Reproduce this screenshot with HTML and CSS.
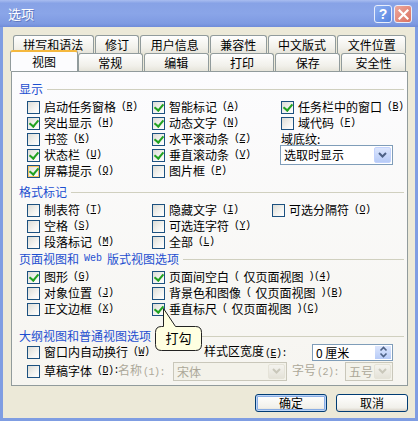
FILE: index.html
```html
<!DOCTYPE html>
<html lang="zh-CN">
<head>
    <meta charset="UTF-8">
    <title>选项</title>
    <link rel="stylesheet" href="styles.css">
</head>
<body>
    <div class="window">
        <!-- 标题栏 -->
        <div class="titlebar">
            <span class="title">选项</span>
            <div class="caption-btns">
                <span class="cap-btn help">?</span>
                <span class="cap-btn close">
                    <svg width="11" height="11" viewBox="0 0 11 11"><path d="M1.5 1.5 L9.5 9.5 M9.5 1.5 L1.5 9.5" stroke="#fff" stroke-width="2.2" stroke-linecap="square"/></svg>
                </span>
            </div>
        </div>

        <div class="client">
            <!-- 选项卡 -->
            <div class="tab-row back">
                <div class="tab">拼写和语法</div>
                <div class="tab">修订</div>
                <div class="tab">用户信息</div>
                <div class="tab">兼容性</div>
                <div class="tab">中文版式</div>
                <div class="tab">文件位置</div>
            </div>
            <div class="tab-row front">
                <div class="tab active">视图</div>
                <div class="tab">常规</div>
                <div class="tab">编辑</div>
                <div class="tab">打印</div>
                <div class="tab">保存</div>
                <div class="tab">安全性</div>
            </div>

            <div class="panel">
                <!-- 显示 -->
                <div class="group">
                    <div class="group-title">显示</div>
                    <div class="grid grid-show">
                        <label class="check"><span class="cb"></span>启动任务窗格<span class="key">(<u>R</u>)</span></label>
                        <label class="check"><span class="cb on"></span>智能标记<span class="key">(<u>A</u>)</span></label>
                        <label class="check"><span class="cb on"></span>任务栏中的窗口<span class="key">(<u>B</u>)</span></label>
                        <label class="check"><span class="cb on"></span>突出显示<span class="key">(<u>H</u>)</span></label>
                        <label class="check"><span class="cb on"></span>动态文字<span class="key">(<u>N</u>)</span></label>
                        <label class="check"><span class="cb"></span>域代码<span class="key">(<u>F</u>)</span></label>
                        <label class="check"><span class="cb"></span>书签<span class="key">(<u>K</u>)</span></label>
                        <label class="check"><span class="cb on"></span>水平滚动条<span class="key">(<u>Z</u>)</span></label>
                        <span class="field-label">域底纹<u>:</u></span>
                        <label class="check"><span class="cb on"></span>状态栏<span class="key">(<u>U</u>)</span></label>
                        <label class="check"><span class="cb on"></span>垂直滚动条<span class="key">(<u>V</u>)</span></label>
                        <div class="combo shade">
                            <span class="val">选取时显示</span>
                            <span class="drop"><svg width="9" height="6" viewBox="0 0 9 6"><path d="M1 1 L4.5 4.5 L8 1" fill="none" stroke="#4d6185" stroke-width="2"/></svg></span>
                        </div>
                        <label class="check"><span class="cb on hot"></span>屏幕提示<span class="key">(<u>Q</u>)</span></label>
                        <label class="check"><span class="cb"></span>图片框<span class="key">(<u>P</u>)</span></label>
                        <span></span>
                    </div>
                </div>

                <!-- 格式标记 -->
                <div class="group group-marks">
                    <div class="group-title">格式标记</div>
                    <div class="grid grid-marks">
                        <label class="check"><span class="cb"></span>制表符<span class="key">(<u>T</u>)</span></label>
                        <label class="check"><span class="cb"></span>隐藏文字<span class="key">(<u>I</u>)</span></label>
                        <label class="check"><span class="cb"></span>可选分隔符<span class="key">(<u>O</u>)</span></label>
                        <label class="check"><span class="cb"></span>空格<span class="key">(<u>S</u>)</span></label>
                        <label class="check"><span class="cb"></span>可选连字符<span class="key">(<u>Y</u>)</span></label>
                        <span></span>
                        <label class="check"><span class="cb"></span>段落标记<span class="key">(<u>M</u>)</span></label>
                        <label class="check"><span class="cb"></span>全部<span class="key">(<u>L</u>)</span></label>
                        <span></span>
                    </div>
                </div>

                <!-- 页面视图 -->
                <div class="group group-page">
                    <div class="group-title">页面视图和<span class="latin">Web</span>版式视图选项</div>
                    <div class="grid grid-page">
                        <label class="check"><span class="cb on"></span>图形<span class="key">(<u>G</u>)</span></label>
                        <label class="check"><span class="cb on"></span>页面间空白<span class="key">(</span>仅页面视图<span class="key">)(<u>4</u>)</span></label>
                        <label class="check"><span class="cb"></span>对象位置<span class="key">(<u>J</u>)</span></label>
                        <label class="check"><span class="cb"></span>背景色和图像<span class="key">(</span>仅页面视图<span class="key">)(<u>B</u>)</span></label>
                        <label class="check"><span class="cb"></span>正文边框<span class="key">(<u>X</u>)</span></label>
                        <label class="check"><span class="cb on"></span>垂直标尺<span class="key">(</span>仅页面视图<span class="key">)(<u>C</u>)</span></label>
                    </div>
                </div>

                <!-- 大纲视图 -->
                <div class="group group-outline">
                    <div class="group-title">大纲视图和普通视图选项</div>
                    <div class="outline-row">
                        <label class="check wrap-check"><span class="cb"></span>窗口内自动换行<span class="key">(<u>W</u>)</span></label>
                        <span class="style-label">样式区宽度<span class="key">(<u>E</u>):</span></span>
                        <div class="spin">
                            <span class="val">0 厘米</span>
                            <span class="spin-btn">
                                <svg width="9" height="12" viewBox="0 0 9 12"><path d="M1.5 4.5 L4.5 1.5 L7.5 4.5 M1.5 7.5 L4.5 10.5 L7.5 7.5" fill="none" stroke="#4d6185" stroke-width="1.6"/></svg>
                            </span>
                        </div>
                    </div>
                    <div class="outline-row row-font">
                        <label class="check draft-check"><span class="cb"></span>草稿字体<span class="key">(<u>D</u>):</span></label>
                        <span class="dim name-label">名称<span class="key">(1):</span></span>
                        <div class="combo dis font-name">
                            <span class="val">宋体</span>
                            <span class="drop"><svg width="9" height="6" viewBox="0 0 9 6"><path d="M1 1 L4.5 4.5 L8 1" fill="none" stroke="#c9c7ba" stroke-width="2"/></svg></span>
                        </div>
                        <span class="dim size-label">字号<span class="key">(2):</span></span>
                        <div class="combo dis font-size">
                            <span class="val">五号</span>
                            <span class="drop"><svg width="9" height="6" viewBox="0 0 9 6"><path d="M1 1 L4.5 4.5 L8 1" fill="none" stroke="#c9c7ba" stroke-width="2"/></svg></span>
                        </div>
                    </div>
                </div>
            </div>

            <!-- 按钮 -->
            <div class="actions">
                <button class="btn default">确定</button>
                <button class="btn">取消</button>
            </div>
        </div>

        <!-- 提示气泡 -->
        <div class="callout">
            <svg width="50" height="50" viewBox="0 0 50 50"><path d="M9.5 5.5 L21.5 23.5 H41.5 Q47.5 23.5 47.5 29.5 V41.5 Q47.5 47.5 41.5 47.5 H7.5 Q1.5 47.5 1.5 41.5 V29.5 Q1.5 23.5 7.5 23.5 H9.5 Z" fill="#ffffe1" stroke="#222" stroke-width="1"/></svg>
            <span class="callout-text">打勾</span>
        </div>
    </div>
</body>
</html>
```

FILE: styles.css
```css
* {
    box-sizing: border-box;
}

body {
    margin: 0;
    padding: 0;
    background: #ece9d8;
    color: #000;
    font-family: "Noto Sans CJK SC", "Liberation Sans", sans-serif;
    font-size: 12px;
    line-height: 16px;
}

.window {
    position: relative;
    width: 418px;
    height: 421px;
    background: #ece9d8;
    border: 3px solid #7f9de2;
    border-top: 0;
    display: flex;
    flex-direction: column;
}

/* 标题栏 */
.titlebar {
    height: 27px;
    margin: 0 -3px;
    padding: 0 6px 0 8px;
    display: flex;
    align-items: center;
    justify-content: space-between;
    background: linear-gradient(to bottom, #a9bdf0 0%, #87a2e6 12%, #8aa5e8 50%, #7e9ae2 88%, #6f8bd8 100%);
}

.title {
    color: #fff;
    font-size: 13px;
    text-shadow: 1px 1px 0 #6078c0;
}

.caption-btns {
    display: flex;
    gap: 2px;
    padding-top: 1px;
}

.cap-btn {
    width: 18px;
    height: 18px;
    border: 1px solid #e8eefc;
    border-radius: 3px;
    display: flex;
    align-items: center;
    justify-content: center;
    color: #fff;
    font-family: "Liberation Sans", sans-serif;
    font-weight: bold;
    font-size: 14px;
}

.help {
    background: linear-gradient(135deg, #8fb0f2, #5684e0);
}

.close {
    background: linear-gradient(135deg, #eea99e, #d9705f);
}

/* 客户区 */
.client {
    flex: 1;
    padding: 8px 7px 0 8px;
    display: flex;
    flex-direction: column;
}

.tab-row {
    display: flex;
    height: 18px;
    margin: 0 1px 0 2px;
}

.tab {
    text-align: center;
    line-height: 17px;
    border: 1px solid #919b9c;
    border-bottom: 0;
    border-radius: 3px 3px 0 0;
    background: linear-gradient(to bottom, #fefefe, #f1f0ea 70%, #e6e4da);
    white-space: nowrap;
}

.back .tab {
    flex: 1 1 auto;
    margin-right: 1px;
}

.front .tab {
    flex: 1 1 0;
    margin-right: 1px;
}

.front .tab.active {
    position: relative;
    z-index: 2;
    height: 21px;
    margin: -3px 0 0 -3px;
    flex-grow: 1.05;
    line-height: 19px;
    background: #fcfcfe;
    border-top: 2px solid #f5b83e;
}

/* 面板 */
.panel {
    height: 315px;
    border: 1px solid #919b9c;
    background: linear-gradient(to bottom, #fcfcfe, #f6f5f0);
    padding: 10px 0 0 7px;
}

.group-title {
    display: flex;
    align-items: center;
    height: 14px;
    line-height: 14px;
    color: #1d4fd0;
    white-space: nowrap;
}

.group-title::after {
    content: "";
    flex: 1;
    margin: 0 3px 0 4px;
    border-top: 1px solid #d0d0bf;
}

.latin {
    font-family: "Liberation Mono", monospace;
    font-size: 10px;
    margin: 0 5px;
}

.grid {
    display: grid;
    grid-auto-rows: 16px;
    padding-left: 8px;
    margin-top: 3px;
}

.grid-show {
    grid-template-columns: 125px 129px 1fr;
}

.grid-marks {
    grid-template-columns: 125px 120px 1fr;
}

.grid-page {
    grid-template-columns: 125px 1fr;
}

.group-marks {
    margin-top: 6px;
}

.group-page {
    margin-top: 2px;
}

.group-outline {
    margin-top: 12px;
}

/* 复选框 */
.check {
    display: flex;
    align-items: center;
    gap: 4px;
    white-space: nowrap;
}

.cb {
    position: relative;
    flex: none;
    width: 13px;
    height: 13px;
    border: 1px solid #1c5180;
    background: linear-gradient(135deg, #dcdcd6 0%, #f4f4f1 60%, #ffffff 100%);
}

.cb.hot {
    box-shadow: inset 0 0 0 1px #f7c462;
}

.cb.on::after {
    content: "";
    position: absolute;
    left: 3px;
    top: 0;
    width: 4px;
    height: 7px;
    border: solid #21a121;
    border-width: 0 2px 2px 0;
    transform: rotate(40deg);
}

.key {
    font-family: "Liberation Mono", monospace;
    font-size: 10px;
    letter-spacing: -0.5px;
    margin-left: 1px;
}

.field-label {
    display: flex;
    align-items: center;
}

/* 下拉框 */
.combo {
    display: flex;
    align-self: center;
    height: 20px;
    border: 1px solid #7f9db9;
    background: #fff;
}

.combo.shade {
    width: 113px;
    margin-left: -1px;
}

.combo .val {
    flex: 1;
    padding-left: 3px;
    line-height: 18px;
    font-size: 12px;
    overflow: hidden;
    white-space: nowrap;
}

.drop {
    width: 17px;
    flex: none;
    margin: 1px;
    border-radius: 2px;
    border: 1px solid #c3d3fd;
    background: linear-gradient(to bottom, #dce6fd, #b7cbf7);
    display: flex;
    align-items: center;
    justify-content: center;
}

.combo.dis {
    height: 19px;
    border-color: #c9c7ba;
    background: #f3f2ea;
    color: #aca899;
}

.combo.dis .val {
    line-height: 17px;
}

.combo.dis .drop {
    border-color: #e5e3d8;
    background: linear-gradient(to bottom, #f4f3ee, #e4e2d8);
}

.font-name {
    width: 114px;
}

.font-size {
    width: 48px;
}

/* 大纲视图选项 */
.outline-row {
    display: flex;
    align-items: center;
    height: 18px;
    padding-left: 8px;
}

.outline-row.row-font {
    height: 20px;
}

.wrap-check {
    width: 177px;
}

.draft-check {
    width: 91px;
}

.name-label {
    width: 55px;
}

.size-label {
    width: 58px;
    padding-left: 5px;
}

.style-label {
    width: 108px;
    white-space: nowrap;
}

.spin {
    display: flex;
    align-items: center;
    width: 81px;
    height: 17px;
    border: 1px solid #7f9db9;
    background: #fff;
}

.spin .val {
    flex: 1;
    padding-left: 3px;
    font-size: 12px;
    line-height: 15px;
    white-space: nowrap;
}

.spin-btn {
    width: 16px;
    height: 13px;
    margin: 1px;
    background: linear-gradient(to bottom, #dce6fd, #b7cbf7);
    display: flex;
    align-items: center;
    justify-content: center;
}

.dim {
    color: #aca899;
    white-space: nowrap;
}

/* 底部按钮 */
.actions {
    display: flex;
    justify-content: flex-end;
    gap: 9px;
    margin-top: 8px;
}

.btn {
    width: 72px;
    height: 18px;
    padding: 0;
    border: 1px solid #003c74;
    border-radius: 3px;
    background: linear-gradient(to bottom, #ffffff, #f1f0ea 80%, #d6d0c5);
    font-family: "Noto Sans CJK SC", sans-serif;
    font-size: 12px;
    line-height: 16px;
    overflow: hidden;
}

.btn.default {
    box-shadow: inset 0 0 0 1px #bcd4f6, inset 0 0 0 2px #89ade4;
}

/* 提示气泡 */
.callout {
    position: absolute;
    left: 151px;
    top: 303px;
    width: 50px;
    height: 50px;
}

.callout svg {
    display: block;
}

.callout-text {
    position: absolute;
    left: 1px;
    right: 2px;
    top: 26px;
    text-align: center;
    font-size: 13px;
    line-height: 18px;
}
```
